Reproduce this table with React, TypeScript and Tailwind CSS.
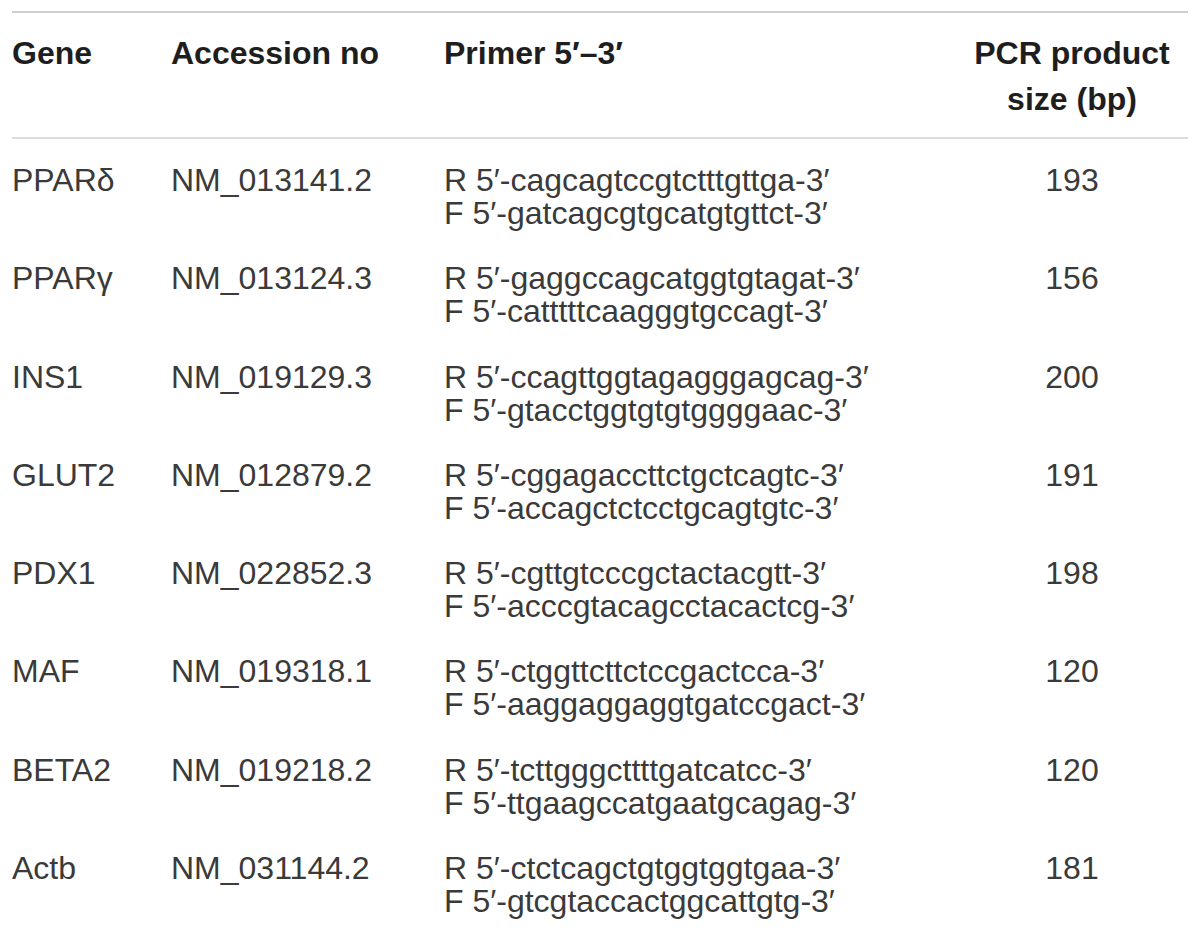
import React from "react";

const rows = [
  { gene: "PPARδ", acc: "NM_013141.2", r: "cagcagtccgtctttgttga", f: "gatcagcgtgcatgtgttct", size: "193" },
  { gene: "PPARγ", acc: "NM_013124.3", r: "gaggccagcatggtgtagat", f: "catttttcaagggtgccagt", size: "156" },
  { gene: "INS1", acc: "NM_019129.3", r: "ccagttggtagagggagcag", f: "gtacctggtgtgtggggaac", size: "200" },
  { gene: "GLUT2", acc: "NM_012879.2", r: "cggagaccttctgctcagtc", f: "accagctctcctgcagtgtc", size: "191" },
  { gene: "PDX1", acc: "NM_022852.3", r: "cgttgtcccgctactacgtt", f: "acccgtacagcctacactcg", size: "198" },
  { gene: "MAF", acc: "NM_019318.1", r: "ctggttcttctccgactcca", f: "aaggaggaggtgatccgact", size: "120" },
  { gene: "BETA2", acc: "NM_019218.2", r: "tcttgggcttttgatcatcc", f: "ttgaagccatgaatgcagag", size: "120" },
  { gene: "Actb", acc: "NM_031144.2", r: "ctctcagctgtggtggtgaa", f: "gtcgtaccactggcattgtg", size: "181" },
];

export default function App() {
  return (
    <div
      className="w-[1200px] h-[949px] bg-white overflow-hidden"
      style={{ fontFamily: '"Liberation Sans", Arial, sans-serif' }}
    >
      <div className="ml-[12px] w-[1176px]">
        <div className="mt-[11px] h-[2px] bg-[#cfcfcf]" />
        <div className="grid grid-cols-[159px_273px_512px_232px] pt-[17px] pb-[15px] text-[32px] leading-[46px] font-bold text-[#1e1e1e]">
          <div>Gene</div>
          <div>Accession no</div>
          <div>Primer 5′–3′</div>
          <div className="text-center">
            <div>PCR product</div>
            <div>size (bp)</div>
          </div>
        </div>
        <div className="h-[2px] bg-[#dcdcdc]" />
        {rows.map((row) => (
          <div
            key={row.gene}
            className="grid grid-cols-[159px_273px_512px_232px] pt-[25px] pb-[7.3px] text-[32px] leading-[33px] text-[#3a3a3a]"
          >
            <div>{row.gene}</div>
            <div>{row.acc}</div>
            <div>
              <div>R 5′-{row.r}-3′</div>
              <div>F 5′-{row.f}-3′</div>
            </div>
            <div className="text-center">{row.size}</div>
          </div>
        ))}
      </div>
    </div>
  );
}
